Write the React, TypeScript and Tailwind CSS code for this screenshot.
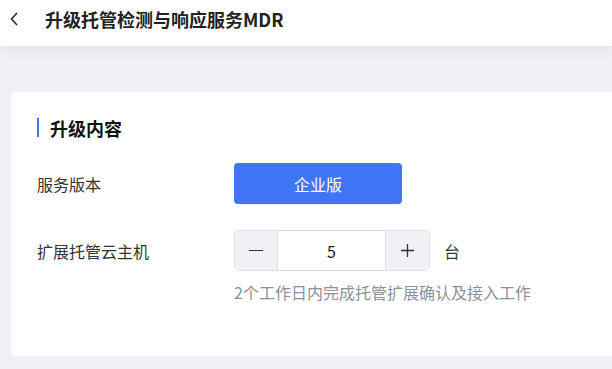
import React from "react";

export default function App() {
  const font = { fontFamily: '"Noto Sans CJK SC", "Noto Sans", sans-serif' };
  return (
    <div className="w-[612px] h-[369px] overflow-hidden bg-[#eff0f4] relative" style={font}>
      <div className="h-[46px] bg-white flex items-center shadow-[0_4px_12px_rgba(0,0,0,0.05)] relative z-10">
        <svg width="10" height="16" viewBox="0 0 10 16" className="ml-[9px] mb-[8px]">
          <path d="M8 2 L2.5 8 L8 14" fill="none" stroke="#222" strokeWidth="1.5" />
        </svg>
        <span className="ml-[26px] mb-[8px] text-[18px] font-bold text-[#222] leading-none">升级托管检测与响应服务MDR</span>
      </div>
      <div className="ml-[11px] mt-[46px] w-[620px] h-[264px] bg-white rounded-[4px] pl-[26px] pt-[26px]">
        <div className="flex items-center h-[19px]">
          <div className="w-[2px] h-[19px] bg-[#3d74f5]" />
          <span className="ml-[11px] text-[18px] font-bold text-[#111] leading-none">升级内容</span>
        </div>
        <div className="flex items-center mt-[26px]">
          <div className="w-[197px] text-[16px] text-[#333]">服务版本</div>
          <div className="w-[168px] h-[41px] rounded-[4px] bg-[#4076f6] text-white text-[16px] flex items-center justify-center">
            企业版
          </div>
        </div>
        <div className="flex items-center mt-[26px]">
          <div className="w-[197px] text-[16px] text-[#333]">扩展托管云主机</div>
          <div className="flex h-[41px] rounded-[5px] border border-[#dcdfe6] overflow-hidden">
            <div className="w-[43px] bg-[#f0f1f5] flex items-center justify-center border-r border-[#dcdfe6]">
              <div className="w-[14px] h-[1.5px] bg-[#333]" />
            </div>
            <div className="w-[107px] bg-white flex items-center justify-center text-[16px] text-[#222]">5</div>
            <div className="w-[44px] bg-[#f0f1f5] flex items-center justify-center border-l border-[#dcdfe6]">
              <svg width="15" height="15" viewBox="0 0 15 15">
                <path d="M7.5 1 V14 M1 7.5 H14" stroke="#333" strokeWidth="1.3" />
              </svg>
            </div>
          </div>
          <span className="ml-[14px] text-[16px] text-[#333]">台</span>
        </div>
        <div className="ml-[197px] mt-[9px] text-[16px] text-[#8c9099]">2个工作日内完成托管扩展确认及接入工作</div>
      </div>
    </div>
  );
}
